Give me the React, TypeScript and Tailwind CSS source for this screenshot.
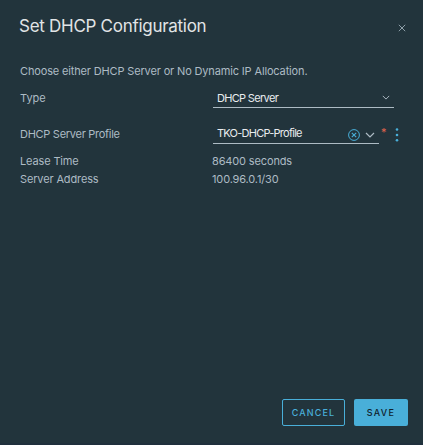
import React from "react";

function Chevron({ className }: { className: string }) {
  return (
    <svg className={className} viewBox="0 0 10 6" fill="none" stroke="currentColor" strokeWidth="1.2">
      <path d="M1 1l4 4 4-4" />
    </svg>
  );
}

function Header() {
  return (
    <header className="flex h-[52px] items-center justify-between pr-[17px]">
      <h1 className="-ml-px text-[17px] leading-6 tracking-[-0.28px] text-[#e1e4e6]">
        Set DHCP Configuration
      </h1>
      <button aria-label="Close" className="mt-1 text-[#8fa0aa]">
        <svg className="size-2" viewBox="0 0 8 8" stroke="currentColor" strokeWidth="1">
          <path d="M.8.8l6.4 6.4M7.2.8L.8 7.2" />
        </svg>
      </button>
    </header>
  );
}

function TypeField() {
  return (
    <div className="flex h-[21px]">
      <label className="w-[193px] pt-[3px]">Type</label>
      <div className="flex w-[181px] justify-between border-b border-[#adbbc4] pt-[3px] pr-[4px] pl-1 text-[#e9ecef]">
        <span className="tracking-[-0.68px]">DHCP Server</span>
        <Chevron className="mt-[5px] h-[5px] w-[8px] text-[#adbbc4]" />
      </div>
    </div>
  );
}

function ProfileField() {
  return (
    <div className="mt-[15px] flex h-[21px]">
      <label className="w-[193px] pt-[3px] tracking-[-0.28px]">DHCP Server Profile</label>
      <div className="flex w-[166px] border-b border-[#adbbc4] pt-[2px] pl-1 text-[#e9ecef]">
        <span className="w-[131px] tracking-[-0.75px]">TKO-DHCP-Profile</span>
        <svg className="mt-[4px] size-3 text-[#49afd9]" viewBox="0 0 12 12" fill="none" stroke="currentColor">
          <circle cx="6" cy="6" r="5.4" />
          <path d="M3.8 3.8l4.4 4.4M8.2 3.8L3.8 8.2" strokeWidth="1.1" />
        </svg>
        <Chevron className="mt-[7px] ml-[5px] h-[6px] w-[10px] text-[#adbbc4]" />
      </div>
      <span className="ml-[2px] w-[14px] pt-px text-[11px] leading-4 text-[#e0644c]">*</span>
      <svg className="mt-[5px] h-[14px] w-1 text-[#49afd9]" viewBox="0 0 4 14" fill="currentColor">
        <circle cx="2" cy="1.5" r="1.3" />
        <circle cx="2" cy="7" r="1.3" />
        <circle cx="2" cy="12.3" r="1.3" />
      </svg>
    </div>
  );
}

function Detail({ label, value }: { label: string; value: string }) {
  return (
    <div className="flex h-[18px] items-center tracking-[-0.14px]">
      <span className="w-[192px]">{label}</span>
      <span>{value}</span>
    </div>
  );
}

export default function App() {
  return (
    <main className="flex h-[445px] w-[423px] flex-col border-b-2 border-[#20303d] bg-[#22343c] pl-[20px] font-['Inter',sans-serif] text-[11px] leading-4 whitespace-nowrap text-[#adbbc4]">
      <Header />
      <p className="mt-[11px] mb-[8px] tracking-[-0.15px]">
        Choose either DHCP Server or No Dynamic IP Allocation.
      </p>
      <TypeField />
      <ProfileField />
      <div className="mt-[8px]">
        <Detail label="Lease Time" value="86400 seconds" />
        <Detail label="Server Address" value="100.96.0.1/30" />
      </div>
      <footer className="mt-auto mb-[17px] flex justify-end gap-[9px] pr-[15px] text-[9px] font-medium">
        <button className="flex h-[27px] w-[63px] items-center justify-center rounded-[2px] border border-[#49afd9] tracking-[1.1px] text-[#49afd9]">
          CANCEL
        </button>
        <button className="flex h-[27px] w-[54px] items-center justify-center rounded-[2px] bg-[#49afd9] tracking-[1.3px] text-[#10222c]">
          SAVE
        </button>
      </footer>
    </main>
  );
}
